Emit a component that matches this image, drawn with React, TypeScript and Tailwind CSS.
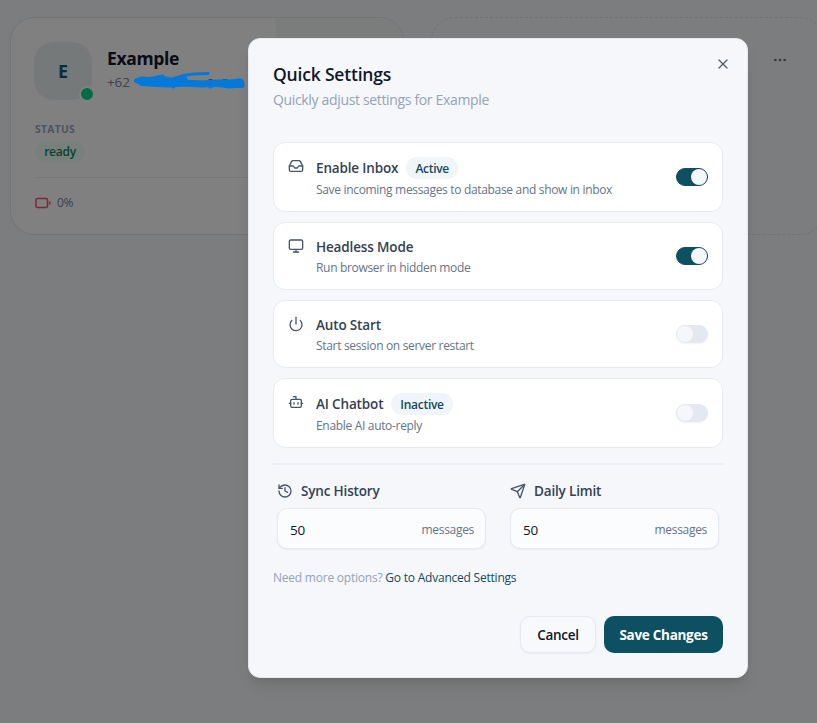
import { Bot, History, Inbox, Monitor, Power, Send, X, Ellipsis } from "lucide-react";
import type { ReactNode } from "react";

function Toggle({ on }: { on: boolean }) {
  return (
    <span
      className={
        on
          ? "flex h-[18px] w-8 shrink-0 items-center justify-end rounded-full border border-[#0d5061] bg-[#0d5061]"
          : "flex h-[18px] w-8 shrink-0 items-center rounded-full border border-[#e3e8f1] bg-[#e3e8f1] shadow-xs"
      }
    >
      <span className="size-4 rounded-full bg-[#f5f7fb]" />
    </span>
  );
}

type RowProps = {
  icon: ReactNode;
  title: ReactNode;
  text: ReactNode;
  badge?: string;
  on: boolean;
};

function Row({ icon, title, text, badge, on }: RowProps) {
  return (
    <div
      className={
        badge
          ? "flex h-[70px] items-center justify-between rounded-xl border border-[#e6eaf3] bg-white px-3.5"
          : "flex h-[68px] items-center justify-between rounded-xl border border-[#e6eaf3] bg-white px-3.5"
      }
    >
      <div className="flex">
        <span className="mt-0.5 text-[#475569]">{icon}</span>
        <div className="ml-3">
          <div className={badge ? "flex h-6 items-center gap-2" : "flex h-[22px] items-center pt-px"}>
            <span className="whitespace-nowrap pt-px text-[13.5px] font-semibold tracking-[-0.15px] text-[#334155]">{title}</span>
            {badge && (
              <span className="flex h-[22px] items-center rounded-full bg-[#f0f5f9] px-[9px] pt-0.5 text-[12px] font-semibold tracking-[-0.28px] text-[#164a5b]">
                {badge}
              </span>
            )}
          </div>
          <p className="h-[19px] whitespace-nowrap text-[12px] leading-[19px] tracking-[-0.32px] text-[#64748b]">{text}</p>
        </div>
      </div>
      <Toggle on={on} />
    </div>
  );
}

function Field({ icon, label }: { icon: ReactNode; label: string }) {
  return (
    <div className="w-[209px]">
      <div className="flex h-5 items-center gap-2 text-[#475569]">
        {icon}
        <span className="text-[13.5px] font-semibold tracking-[-0.17px] text-[#334155]">{label}</span>
      </div>
      <div className="mt-[7px] flex h-[41px] items-center justify-between rounded-[10px] border border-[#e4e9f2] bg-[#fafcfe] pl-3 pr-[11px] pt-[3px] shadow-xs">
        <span className="text-[13.5px] tracking-[-0.2px] text-[#0f172a]">50</span>
        <span className="text-[12px] font-medium tracking-[-0.3px] text-[#64748b]">messages</span>
      </div>
    </div>
  );
}

export default function App() {
  return (
    <div className="relative h-[723px] w-[817px] overflow-hidden bg-[#7c7d7f] font-['Open_Sans','Noto_Sans',sans-serif]">
      <main className="flex w-[830px] gap-[27px] pl-2.5 pt-[17px]">
        <section className="relative h-[218px] w-[394px] shrink-0 overflow-hidden rounded-3xl border border-[#737477] bg-[#808080] px-6 pt-6">
          <div className="absolute right-0 top-0 h-32 w-32 rounded-bl-full bg-[#7b7d7d]" />
          <div className="flex">
            <div className="relative -ml-px flex size-[58px] items-center justify-center rounded-[20px] bg-[#76797a] text-[18px] font-bold text-[#072f3b]">
              E
              <span className="absolute -bottom-[2px] -right-[3px] size-4 rounded-full border-2 border-[#808080] bg-[#006d46]" />
            </div>
            <div className="ml-[15px] pt-1">
              <h2 className="text-[17.5px] font-bold leading-[25px] tracking-[-0.35px] text-[#080c15]">Example</h2>
              <p className="text-[13.5px] leading-[22px] tracking-[-0.1px] text-[#3b424d]">+62</p>
            </div>
          </div>
          <p className="mt-[21px] text-[10.3px] font-bold leading-4 tracking-[0.3px] text-[#4c5361]">STATUS</p>
          <div className="mt-[5px] flex h-5 w-[50px] items-center justify-center rounded-full bg-[#78807c] text-[12px] font-semibold tracking-[-0.25px] text-[#08432f]">
            ready
          </div>
          <div className="mt-[15px] flex h-[50px] items-center gap-1.5 border-t border-[#75787c] text-[12px] tracking-[-0.3px] text-[#374151]">
            <svg width="16" height="12" viewBox="0 0 16 12" fill="none" stroke="#802636" strokeWidth="1.5" strokeLinecap="round">
              <rect x="1" y="1.5" width="11.5" height="9" rx="1.5" />
              <path d="M14.8 5v2" />
            </svg>
            <span>0%</span>
          </div>
        </section>
        <section className="h-[218px] w-[393px] shrink-0 rounded-3xl border border-dashed border-[#707275] pl-[340px] pt-[34px]">
          <Ellipsis size={16} className="text-[#343b49]" />
        </section>
      </main>

      <svg className="absolute left-[134px] top-[71px]" width="114" height="20" viewBox="0 0 114 20" fill="none" strokeLinecap="round" strokeLinejoin="round">
        <path d="M5 8.500h6M75 8.500h3M89 8.500h4M109 10v5" stroke="#2b4a70" strokeWidth="1" />
        <g stroke="#0479d9">
          <path d="M2 9 8 7l8 .5L29 5M38 8l14-4 8-1 14-.5M38 13l1.500 3M76 16l5-2 14 2 14-1" strokeWidth="3" />
          <path d="M2 10 7 12" strokeWidth="4" />
          <path d="M8 11.500l14 1 14 .5 14-1 18 1 16-1 12 0 10-1M103 12l4 1.500M22 10l10-1 8 2 10-3" strokeWidth="7" />
        </g>
      </svg>

      <div
        role="dialog"
        className="absolute left-[248px] top-[38px] flex h-[640px] w-[500px] flex-col rounded-xl border border-[#e4e9f2] bg-[#f5f7fb] px-6 pt-[22px] shadow-lg"
      >
        <div className="flex items-start justify-between">
          <div>
            <h1 className="text-[17.5px] font-semibold leading-[26px] tracking-[-0.19px] text-[#111827]">Quick Settings</h1>
            <p className="mt-0.5 text-[14px] leading-[22px] tracking-[-0.34px] text-[#94a3b8]">Quickly adjust settings for Example</p>
          </div>
          <X size={16} strokeWidth={1.8} className="-mr-2 -mt-[5px] text-[#555b64]" />
        </div>

        <div className="mt-[31px] flex flex-col gap-2.5">
          <Row icon={<Inbox size={16} />} title="Enable Inbox" badge="Active" text="Save incoming messages to database and show in inbox" on />
          <Row icon={<Monitor size={16} />} title="Headless Mode" text="Run browser in hidden mode" on />
          <Row icon={<Power size={16} />} title="Auto Start" text="Start session on server restart" on={false} />
          <Row icon={<Bot size={16} />} title="AI Chatbot" badge="Inactive" text="Enable AI auto-reply" on={false} />
        </div>

        <div className="mt-[15px] h-0.5 shrink-0 bg-[#e9edf4]" />

        <div className="mt-4 flex justify-between pl-1 pr-1">
          <Field icon={<History size={16} />} label="Sync History" />
          <Field icon={<Send size={16} />} label="Daily Limit" />
        </div>

        <p className="mt-[19px] text-[12px] leading-5 tracking-[-0.22px] text-[#94a3b8]">
          Need more options? <a className="text-[#164a5b]">Go to Advanced Settings</a>
        </p>

        <div className="mt-7 flex justify-end gap-2">
          <button className="h-[37px] w-[76px] rounded-[10px] border border-[#e4e9f2] bg-[#f7f9fc] pt-0.5 text-[13.5px] font-semibold tracking-[-0.28px] text-[#0f172a] shadow-xs">
            Cancel
          </button>
          <button className="h-[37px] w-[119px] rounded-[10px] bg-[#0d5061] pt-0.5 text-[13.5px] font-bold tracking-[-0.28px] text-white">
            Save Changes
          </button>
        </div>
      </div>
    </div>
  );
}
